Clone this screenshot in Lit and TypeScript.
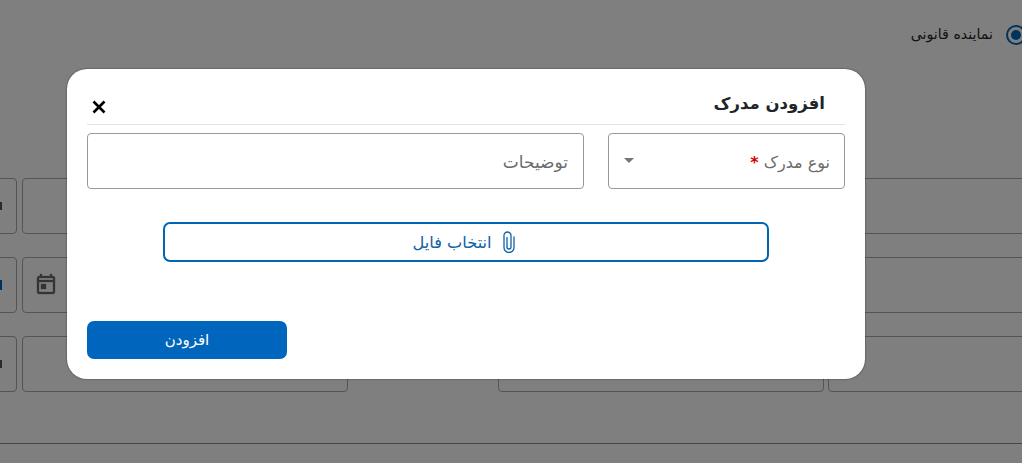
import { LitElement, html, css } from "lit";
import { customElement } from "lit/decorators.js";

@customElement("app-root")
export class AppRoot extends LitElement {
  static styles = css`
    :host {
      display: block;
      width: 1022px;
      height: 463px;
      overflow: hidden;
      position: relative;
      background: #fff;
      font-family: "DejaVu Sans", "Noto Sans", sans-serif;
    }
    .page {
      height: 463px;
      display: flex;
      flex-direction: column;
      overflow: hidden;
    }
    .radio-row {
      height: 178px;
      flex: none;
      display: flex;
      justify-content: flex-start;
      align-items: flex-start;
      gap: 13px;
      padding-top: 24px;
      box-sizing: border-box;
      margin-right: -4px;
      color: #222;
      font-size: 14.2px;
      line-height: 20px;
    }
    .radio {
      width: 20px;
      height: 20px;
      box-sizing: border-box;
      border: 2px solid #0066bd;
      border-radius: 50%;
      display: flex;
      align-items: center;
      justify-content: center;
      flex: none;
      margin-top: 1px;
    }
    .radio i {
      display: block;
      width: 10px;
      height: 10px;
      border-radius: 50%;
      background: #0066bd;
    }
    .rows {
      display: flex;
      flex-direction: column;
      gap: 23px;
    }
    .row {
      display: flex;
      margin-left: -40px;
      width: 1240px;
    }
    .f {
      height: 56px;
      box-sizing: border-box;
      border: 1px solid #aaa;
      border-radius: 4px;
      flex: none;
      display: flex;
      align-items: center;
    }
    .f1 {
      width: 57px;
      margin-right: 5px;
      justify-content: flex-end;
      padding-right: 14px;
    }
    .mark { display: block; width: 2px; height: 8px; background: #555; }
    .mark.blue { background: #0066bd; height: 10px; }
    .f2 { width: 326px; margin-right: 150px; padding-left: 11px; color: #6a6a6a; }
    .f3 { width: 326px; margin-right: 4px; }
    .f4 { width: 326px; }
    .foot {
      margin-top: 51px;
      border-top: 1px solid #8c8c8c;
    }
    .overlay {
      position: absolute;
      inset: 0;
      background: rgba(0, 0, 0, 0.5);
      display: flex;
      justify-content: flex-start;
      align-items: flex-start;
      padding: 69px 0 0 67px;
      box-sizing: border-box;
    }
    .dialog {
      width: 798px;
      height: 310px;
      box-sizing: border-box;
      background: #fff;
      border-radius: 20px;
      box-shadow: 0 0 2px rgba(0, 0, 0, 0.6);
      padding: 0 20px;
      display: flex;
      flex-direction: column;
    }
    .head {
      height: 56px;
      flex: none;
      box-sizing: border-box;
      border-bottom: 1px solid #e3e3e3;
      display: flex;
      align-items: center;
      justify-content: space-between;
      padding: 14px 20px 0 4px;
    }
    .title {
      font-size: 16.5px;
      font-weight: 700;
      color: #212529;
      line-height: 24px;
    }
    .close { display: block; width: 16px; height: 16px; margin-top: 6px; }
    .fields {
      margin-top: 8px;
      display: flex;
      gap: 24px;
    }
    .box {
      height: 56px;
      box-sizing: border-box;
      border: 1px solid #999;
      border-radius: 4px;
      display: flex;
      align-items: center;
      color: #6b6b6b;
      padding: 2px 14px 0;
    }
    .desc { width: 497px; justify-content: flex-end; font-size: 17px; padding-right: 15px; }
    .type { width: 237px; justify-content: space-between; font-size: 16px; }
    .caret {
      width: 0;
      height: 0;
      border-left: 5px solid transparent;
      border-right: 5px solid transparent;
      border-top: 5px solid #757575;
      margin: 0 0 4px 1px;
    }
    .star { color: #d50000; font-weight: 700; }
    .file-wrap {
      margin-top: 33px;
      display: flex;
      justify-content: center;
    }
    .file {
      width: 606px;
      height: 40px;
      box-sizing: border-box;
      border: 2px solid #0066b3;
      border-radius: 7px;
      display: flex;
      align-items: center;
      justify-content: center;
      gap: 11px;
      color: #0f62a8;
      font-size: 16.2px;
      background: #fff;
      padding-right: 5px;
    }
    .clip { display: block; width: 12px; height: 22px; }
    .actions {
      margin-top: 59px;
    }
    .add {
      width: 200px;
      height: 38px;
      border-radius: 7px;
      background: #0066bd;
      color: #fff;
      display: flex;
      align-items: center;
      justify-content: center;
      font-size: 15px;
    }
    .cal { display: block; width: 24px; height: 24px; margin-bottom: 3px; }
    .cal path { stroke: currentColor; stroke-width: 0.3; }
  `;

  render() {
    return html`
      <div class="page">
        <div class="radio-row" dir="rtl">
          <span class="radio"><i></i></span>
          <span>نماینده قانونی</span>
        </div>
        <div class="rows">
          <div class="row">
            <div class="f f1"><span class="mark"></span></div><div class="f f2"></div><div class="f f3"></div><div class="f f4"></div>
          </div>
          <div class="row">
            <div class="f f1"><span class="mark blue"></span></div>
            <div class="f f2">
              <svg class="cal" viewBox="0 0 24 24" fill="currentColor"><path d="M19 4h-1V2h-2v2H8V2H6v2H5c-1.1 0-2 .9-2 2v14c0 1.1.9 2 2 2h14c1.1 0 2-.9 2-2V6c0-1.1-.9-2-2-2zm0 16H5V10h14v10zm0-12H5V6h14v2zM7 12h5v5H7z"/></svg>
            </div>
            <div class="f f3"></div><div class="f f4"></div>
          </div>
          <div class="row">
            <div class="f f1"><span class="mark"></span></div><div class="f f2"></div><div class="f f3"></div><div class="f f4"></div>
          </div>
        </div>
        <div class="foot"></div>
      </div>
      <div class="overlay">
        <div class="dialog">
          <div class="head">
            <svg class="close" viewBox="0 0 16 16" fill="none" stroke="#000" stroke-width="2.6"><path d="M2.5 2.5l11 11M13.5 2.5l-11 11"/></svg>
            <div class="title" dir="rtl">افزودن مدرک</div>
          </div>
          <div class="fields">
            <div class="box desc" dir="ltr"><span dir="rtl">توضیحات</span></div>
            <div class="box type">
              <span class="caret"></span>
              <span dir="rtl">نوع مدرک <span class="star">*</span></span>
            </div>
          </div>
          <div class="file-wrap">
            <div class="file">
              <span dir="rtl">انتخاب فایل</span>
              <svg class="clip" viewBox="0 0 12 22" fill="none" stroke="currentColor" stroke-width="1.3" stroke-linecap="round"><path d="M4 6.5V16a2 2 0 0 0 4 0V4.5a3.5 3.5 0 0 0-7 0V16.5a5 5 0 0 0 10 0V6"/></svg>
            </div>
          </div>
          <div class="actions">
            <div class="add" dir="rtl">افزودن</div>
          </div>
        </div>
      </div>
    `;
  }
}
